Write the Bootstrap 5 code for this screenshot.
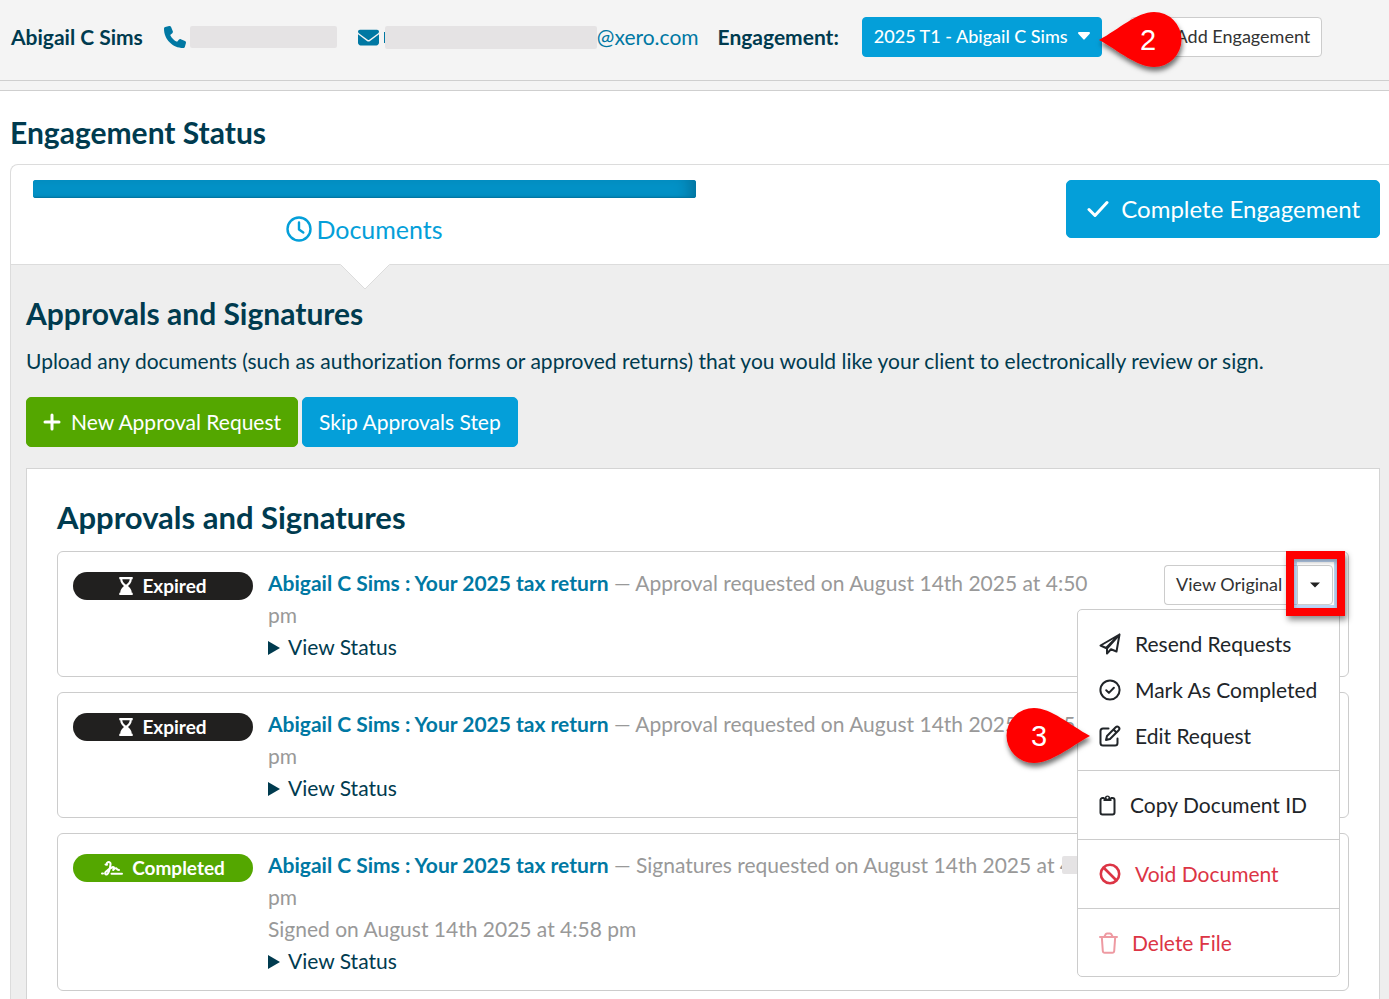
<!DOCTYPE html>
<html lang="en">
<head>
<meta charset="utf-8">
<meta name="viewport" content="width=device-width, initial-scale=1">
<title>Engagement Status</title>
<link href="https://cdn.jsdelivr.net/npm/bootstrap@5.3.0/dist/css/bootstrap.min.css" rel="stylesheet">
<style>
  :root { --navy: #003b4f; --link: #0078a3; --blue: #049fd9; --green: #54a700; --line: #cfcfcf; }
  body { font-family: Lato, sans-serif; font-size: 21px; line-height: 32px; font-variant-ligatures: none; color: var(--navy); background: #fff; overflow-x: hidden; }
  h1, h2 { font-size: 30px; line-height: 36px; font-weight: 700; margin: 0; }
  h3 { font-size: 31px; line-height: 36px; font-weight: 700; margin: 0; }
  a { color: var(--link); text-decoration: none; }
  .btn { --bs-btn-border-radius: 5px; font-size: 21px; line-height: 32px; padding: 8px 16px; white-space: nowrap; }
  .btn-compact { font-size: 18px; line-height: 26px; padding: 5px 11px 7px; --bs-btn-border-radius: 4px; }
  .btn-blue { --bs-btn-color: #fff; --bs-btn-bg: var(--blue); --bs-btn-border-color: var(--blue); --bs-btn-hover-color: #fff; --bs-btn-hover-bg: #038fc4; }
  .btn-green { --bs-btn-color: #fff; --bs-btn-bg: var(--green); --bs-btn-border-color: var(--green); --bs-btn-hover-color: #fff; --bs-btn-hover-bg: #4a9400; gap: 10px; }
  .btn-plain { --bs-btn-color: #333; --bs-btn-bg: #fff; --bs-btn-border-color: #ccc; --bs-btn-hover-bg: #f5f5f5; --bs-btn-hover-border-color: #ccc; }
  .btn-large { font-size: 24px; line-height: 36px; padding: 10px 19px 10px 20px; gap: 12px; }

  .client-bar { background: #f4f4f4; border-bottom: 1px solid var(--line); padding: 17px 11px 23px; }
  .bar-rule { height: 10px; background: #f4f4f4; border-bottom: 1px solid var(--line); }
  .contact { margin-left: 21px; }
  .redacted { display: inline-block; height: 22px; background: #e5e3e4; border-radius: 2px; }
  .redacted-phone { width: 147px; margin-left: 4px; }
  .redacted-mail { width: 212px; height: 23px; }
  .mail-edge { width: 1px; height: 11px; background: var(--link); margin-left: 5px; }
  .engagement-label { margin-left: 19px; margin-right: 23px; }
  .engagement-toggle { gap: 10px; }

  .callout { position: absolute; width: 92px; height: 70px; z-index: 5; pointer-events: none; }
  .callout text { font-family: "Liberation Sans", sans-serif; font-size: 29px; fill: #fff; }
  .callout-header { left: 233px; top: -5px; }
  .callout-menu { right: 238px; top: 143px; }

  main { padding-left: 10px; }
  .status-title { padding: 23px 0 14px; }
  .status-panel { border: 1px solid #dcdcdc; border-width: 1px 0 0 1px; border-top-left-radius: 8px; }
  .steps { padding-bottom: 17px; }
  .step { padding: 15px 4px 0 22px; }
  .progress { --bs-progress-height: 18px; --bs-progress-border-radius: 3px; --bs-progress-bar-bg: #0392c7; --bs-progress-bg: #0392c7; }
  .progress-bar { box-shadow: inset -14px 0 16px -8px #04719b, inset 0 -2px 2px -1px #04719b; }
  .step-link { font-size: 25px; line-height: 36px; color: var(--blue); gap: 4px; margin-top: 13px; }
  .step-action { padding: 15px 9px 0 0; }
  .step-body { position: relative; background: #eee; border-top: 1px solid #dcdcdc; padding: 30px 9px 0 15px; }
  .step-pointer { position: absolute; left: 25%; top: -1px; width: 50px; height: 26px; margin-left: -16px; }
  .step-note { margin: 14px 0 20px; }

  .sheet { background: #fff; border: 1px solid #d4d4d4; border-bottom: 0; margin-top: 21px; padding: 30px 30px 7px; }
  .request-list { margin-top: 16px; gap: 15px; }
  .request { border: 1px solid #ccc; border-radius: 6px; padding: 13px 15px; }
  .state { width: 180px; height: 28px; margin-top: 7px; margin-right: 15px; border-radius: 14px; font-size: 19px; line-height: 28px; font-weight: 700; color: #fff; gap: 9px; }
  .state-expired { background: #21201f; }
  .state-done { background: var(--green); }
  .request-text { padding-top: 2px; }
  .quiet { color: #999; }
  .request-actions { width: 230px; }
  summary { width: max-content; list-style: none; }
  summary::before { content: ""; display: inline-block; border: 7px solid transparent; border-left: 12px solid var(--navy); border-right: 0; margin-right: 8px; }
  .veiled { position: relative; }
  .veiled::after { content: ""; position: absolute; left: 2px; top: 4px; width: 36px; height: 18px; background: #e5e3e4; border-radius: 2px; }

  .split-main { width: 134px; text-align: left; border-right: 0; }
  .split-toggle { width: 36px; padding: 6px 0; }
  .split-toggle::after { display: none; }
  .focus-frame { position: absolute; right: -12px; top: -14px; width: 59px; height: 65px; border: 8px solid #f00; z-index: 4; pointer-events: none; box-shadow: 2px 4px 6px rgba(0,0,0,.45), inset 0 3px 4px rgba(0,0,0,.3), inset 0 0 0 3px rgba(110,165,235,.45); }

  .menu-open { top: 44px; right: -7px; width: 263px; border: 1px solid #ccc; border-radius: 5px; padding: 11px 0 10px; font-size: 21px; z-index: 3; }
  .menu-open .dropdown-item { height: 46px; padding: 0 21px; color: #212529; gap: 14px; }
  .menu-open .dropdown-divider { margin: 11px 0; border-color: #ccc; opacity: 1; }
  .menu-open .text-danger { color: #dc3545; }
  svg { flex: none; }
</style>
</head>
<body class="d-flex flex-column min-vh-100">

<header>
  <div class="client-bar d-flex align-items-center">
    <span class="fw-bold">Abigail C Sims</span>
    <a href="#" class="contact d-flex align-items-center" aria-label="Phone">
      <svg width="22" height="22" viewBox="0 0 512 512" fill="#0078a3"><path d="M164.900 24.600c-7.700-18.600-28-28.500-47.400-23.200l-88 24C12.100 30.200 0 46 0 64c0 247.400 200.600 448 448 448 18 0 33.800-12.100 38.600-29.500l24-88c5.300-19.400-4.600-39.700-23.200-47.400l-96-40c-16.300-6.800-35.200-2.100-46.300 11.600L304.700 368C234.300 334.700 177.300 277.700 144 207.300L193.300 167c13.700-11.200 18.400-30 11.600-46.300l-40-96z"/></svg>
      <span class="redacted redacted-phone"></span>
    </a>
    <a href="#" class="contact d-flex align-items-center">
      <svg width="21" height="21" viewBox="0 0 512 512" fill="#0078a3"><path d="M48 64C21.500 64 0 85.500 0 112c0 15.100 7.100 29.300 19.200 38.400l217.600 163.200c11.400 8.500 27 8.500 38.400 0l217.600-163.200c12.100-9.100 19.200-23.300 19.200-38.400 0-26.500-21.500-48-48-48H48zM0 176v208c0 35.300 28.700 64 64 64h384c35.300 0 64-28.700 64-64V176L294.400 339.200c-22.800 17.100-54 17.100-76.800 0L0 176z"/></svg>
      <span class="mail-edge"></span><span class="redacted redacted-mail"></span><span>@xero.com</span>
    </a>
    <span class="engagement-label fw-bold">Engagement:</span>
    <div class="position-relative d-flex">
      <button type="button" class="btn btn-compact btn-blue engagement-toggle fw-medium d-flex align-items-center me-4" aria-haspopup="true">2025 T1 - Abigail C Sims
        <svg width="12" height="8" viewBox="0 0 12 8" fill="#fff"><path d="M1 0h10a1 1 0 0 1 .7 1.700L6.700 7.300a1 1 0 0 1-1.400 0L.3 1.700A1 1 0 0 1 1 0z"/></svg>
      </button>
      <button type="button" class="btn btn-compact btn-plain d-flex align-items-center ms-1">
        <svg class="me-3" width="18" height="18" viewBox="0 0 18 18" stroke="#333" stroke-width="2"><path d="M9 2v14M2 9h14"/></svg>Add Engagement
      </button>
      <svg class="callout callout-header" viewBox="0 0 92 70">
        <defs><filter id="drop" x="-20%" y="-20%" width="150%" height="160%"><feDropShadow dx="1" dy="4" stdDeviation="2.500" flood-color="#000" flood-opacity=".55"/></filter></defs>
        <path filter="url(#drop)" fill="#f00" d="M4 28C24 17 42 0 59 0a27.500 27.500 0 0 1 0 55C42 55 24 39 4 28z"/>
        <text x="45" y="38">2</text>
      </svg>
    </div>
  </div>
  <div class="bar-rule"></div>
</header>

<main class="d-flex flex-column flex-grow-1">
  <h1 class="status-title">Engagement Status</h1>
  <section class="status-panel d-flex flex-column flex-grow-1">
    <div class="steps d-flex justify-content-between align-items-start">
      <div class="step w-50">
        <div class="progress" role="progressbar" aria-label="Engagement progress" aria-valuenow="100" aria-valuemin="0" aria-valuemax="100"><div class="progress-bar w-100"></div></div>
        <a href="#" class="step-link d-flex justify-content-center align-items-center">
          <svg width="26" height="26" viewBox="0 0 26 26" fill="none" stroke="#049fd9" stroke-width="2.400" stroke-linecap="round" stroke-linejoin="round"><circle cx="13" cy="13" r="11.500"/><path d="M13 6.500V13.500l4.300 3"/></svg>
          Documents
        </a>
      </div>
      <div class="step-action">
        <button type="button" class="btn btn-large btn-blue d-flex align-items-center">
          <svg width="22" height="18" viewBox="0 0 22 18" fill="none" stroke="#fff" stroke-width="3" stroke-linecap="round" stroke-linejoin="round"><path d="M2 9.500l6 6L20 2.500"/></svg>
          Complete Engagement
        </button>
      </div>
    </div>

    <div class="step-body d-flex flex-column flex-grow-1">
      <svg class="step-pointer" viewBox="0 0 50 26"><path d="M0 0h50L25 25z" fill="#fff"/><path d="M.5 .5L25 25 49.500 .5" fill="none" stroke="#dcdcdc"/></svg>
      <h2>Approvals and Signatures</h2>
      <p class="step-note">Upload any documents (such as authorization forms or approved returns) that you would like your client to electronically review or sign.</p>
      <div class="d-flex gap-1">
        <button type="button" class="btn btn-green d-flex align-items-center">
          <svg width="18" height="18" viewBox="0 0 18 18" stroke="#fff" stroke-width="3" stroke-linecap="round"><path d="M9 2v14M2 9h14"/></svg>New Approval Request
        </button>
        <button type="button" class="btn btn-blue">Skip Approvals Step</button>
      </div>

      <div class="sheet flex-grow-1">
        <h3>Approvals and Signatures</h3>
        <div class="request-list d-flex flex-column">

          <article class="request d-flex align-items-start">
            <div class="state state-expired flex-shrink-0 d-flex justify-content-center align-items-center">
              <svg width="14" height="18" viewBox="0 0 14 18" fill="#fff"><path fill-rule="evenodd" d="M.3 0h13.400v2.200h-.9C12.700 5.500 10.800 7.600 9 9c1.800 1.400 3.700 3.500 3.800 6.800h.9V18H.3v-2.200h.9C1.300 12.500 3.200 10.400 5 9 3.200 7.600 1.300 5.500 1.200 2.200H.3zM3.300 2.200c.1 2 1.500 3.900 3.700 5.500 2.200-1.600 3.600-3.500 3.700-5.500z"/></svg>
              Expired
            </div>
            <div class="request-text flex-fill">
              <div><a href="#" class="fw-bold">Abigail C Sims : Your 2025 tax return</a> <span class="quiet">— Approval requested on August 14th 2025 at 4:50 pm</span></div>
              <details><summary>View Status</summary></details>
            </div>
            <div class="request-actions position-relative flex-shrink-0 d-flex justify-content-end">
              <div class="btn-group">
                <button type="button" class="btn btn-compact btn-plain split-main">View Original</button>
                <button type="button" class="btn btn-compact btn-plain split-toggle dropdown-toggle d-flex align-items-center justify-content-center" aria-label="More actions" aria-expanded="true">
                  <svg width="10" height="6" viewBox="0 0 10 6" fill="#222"><path d="M0 .5h10L5 5.500z"/></svg>
                </button>
              </div>
              <span class="focus-frame"></span>
              <div class="dropdown-menu menu-open show">
                <a href="#" class="dropdown-item d-flex align-items-center"><svg width="22" height="22" viewBox="0 0 22 22" fill="none" stroke="#212529" stroke-width="2" stroke-linejoin="round"><path d="M20.500 1.500L1.500 12.500l5.500 2.500zM20.500 1.500L17.500 18.500l-5.500-2.200L8 20.500V15.500zM20.500 1.500L8 15.500"/></svg>Resend Requests</a>
                <a href="#" class="dropdown-item d-flex align-items-center"><svg width="22" height="22" viewBox="0 0 22 22" fill="none" stroke="#212529" stroke-width="2" stroke-linecap="round" stroke-linejoin="round"><circle cx="11" cy="11" r="9.600"/><path d="M7.200 11.300l2.700 2.600 5-5.200"/></svg>Mark As Completed</a>
                <a href="#" class="dropdown-item d-flex align-items-center"><svg width="22" height="22" viewBox="0 0 22 22" fill="none" stroke="#212529" stroke-width="2" stroke-linecap="round" stroke-linejoin="round"><path d="M9.500 3.500H4a2.500 2.500 0 0 0-2.500 2.500v12A2.500 2.500 0 0 0 4 20.500h12a2.500 2.500 0 0 0 2.500-2.500v-4.500M7 15l1-4 8.700-8.700a2 2 0 0 1 3 3L11 14zM14.500 4.500l3 3"/></svg>Edit Request</a>
                <hr class="dropdown-divider">
                <a href="#" class="dropdown-item d-flex align-items-center"><svg width="17" height="22" viewBox="0 0 17 22" fill="none" stroke="#212529" stroke-width="2" stroke-linejoin="round"><path d="M5 4H3.500A2 2 0 0 0 1.500 6v12.500a2 2 0 0 0 2 2h10a2 2 0 0 0 2-2V6a2 2 0 0 0-2-2H12"/><path fill="#212529" stroke="none" fill-rule="evenodd" d="M4.500 7V3.500h1.300a2.800 2.800 0 0 1 5.400 0h1.300V7zM8.500 2.700a1 1 0 1 0 0 2 1 1 0 0 0 0-2z"/></svg>Copy Document ID</a>
                <hr class="dropdown-divider">
                <a href="#" class="dropdown-item text-danger d-flex align-items-center"><svg width="22" height="22" viewBox="0 0 22 22" fill="none" stroke="#dc3545" stroke-width="2.600"><circle cx="11" cy="11" r="9.200"/><path d="M4.500 4.500l13 13"/></svg>Void Document</a>
                <hr class="dropdown-divider">
                <a href="#" class="dropdown-item text-danger d-flex align-items-center"><svg width="19" height="22" viewBox="0 0 19 22" fill="none" stroke="#ee9aa2" stroke-width="2" stroke-linecap="round" stroke-linejoin="round"><path d="M1 5h17M2.800 5l1 14a2 2 0 0 0 2 1.800h7.400a2 2 0 0 0 2-1.800l1-14M5.500 4.500l1-2A1.800 1.800 0 0 1 8 1.400h3a1.800 1.800 0 0 1 1.500 1.100l1 2"/></svg>Delete File</a>
              </div>
              <svg class="callout callout-menu" viewBox="0 0 92 70">
                <path filter="url(#drop)" fill="#f00" d="M87 28C67 17 48 0 31 0a27.500 27.500 0 0 0 0 55C48 55 67 39 87 28z"/>
                <text x="28" y="38">3</text>
              </svg>
            </div>
          </article>

          <article class="request d-flex align-items-start">
            <div class="state state-expired flex-shrink-0 d-flex justify-content-center align-items-center">
              <svg width="14" height="18" viewBox="0 0 14 18" fill="#fff"><path fill-rule="evenodd" d="M.3 0h13.400v2.200h-.9C12.700 5.500 10.800 7.600 9 9c1.800 1.400 3.700 3.500 3.800 6.800h.9V18H.3v-2.200h.9C1.300 12.500 3.200 10.400 5 9 3.200 7.600 1.300 5.500 1.200 2.200H.3zM3.300 2.200c.1 2 1.500 3.900 3.700 5.500 2.200-1.600 3.600-3.500 3.700-5.500z"/></svg>
              Expired
            </div>
            <div class="request-text flex-fill">
              <div><a href="#" class="fw-bold">Abigail C Sims : Your 2025 tax return</a> <span class="quiet">— Approval requested on August 14th 2025 at 4:55 pm</span></div>
              <details><summary>View Status</summary></details>
            </div>
            <div class="request-actions flex-shrink-0"></div>
          </article>

          <article class="request d-flex align-items-start">
            <div class="state state-done flex-shrink-0 d-flex justify-content-center align-items-center">
              <svg width="22" height="15" viewBox="0 0 22 15" fill="none" stroke="#fff" stroke-width="2" stroke-linecap="round" stroke-linejoin="round"><path d="M1 12.500h1M4.500 3.500l1.500.3M6 2C7.500.5 10 .8 9.500 3.500 9 7 8 12 6 13.300c-1.500.8-2.500-.8-1.300-2.500C6.500 8.500 10 6.800 12 6c1.500-.3 1 1.500.2 3 1.300-1.500 3-2.300 3.500-1.300.3.800.3 1.300 2.300 1.300M10.500 12.700H21"/></svg>
              Completed
            </div>
            <div class="request-text flex-fill">
              <div><a href="#" class="fw-bold">Abigail C Sims : Your 2025 tax return</a> <span class="quiet">— Signatures requested on August 14th 2025 at <span class="veiled">4:58</span> pm</span></div>
              <div class="quiet">Signed on August 14th 2025 at 4:58 pm</div>
              <details><summary>View Status</summary></details>
            </div>
            <div class="request-actions flex-shrink-0"></div>
          </article>

        </div>
      </div>
    </div>
  </section>
</main>
<script src="https://cdn.jsdelivr.net/npm/bootstrap@5.3.0/dist/js/bootstrap.bundle.min.js"></script>
</body>
</html>
